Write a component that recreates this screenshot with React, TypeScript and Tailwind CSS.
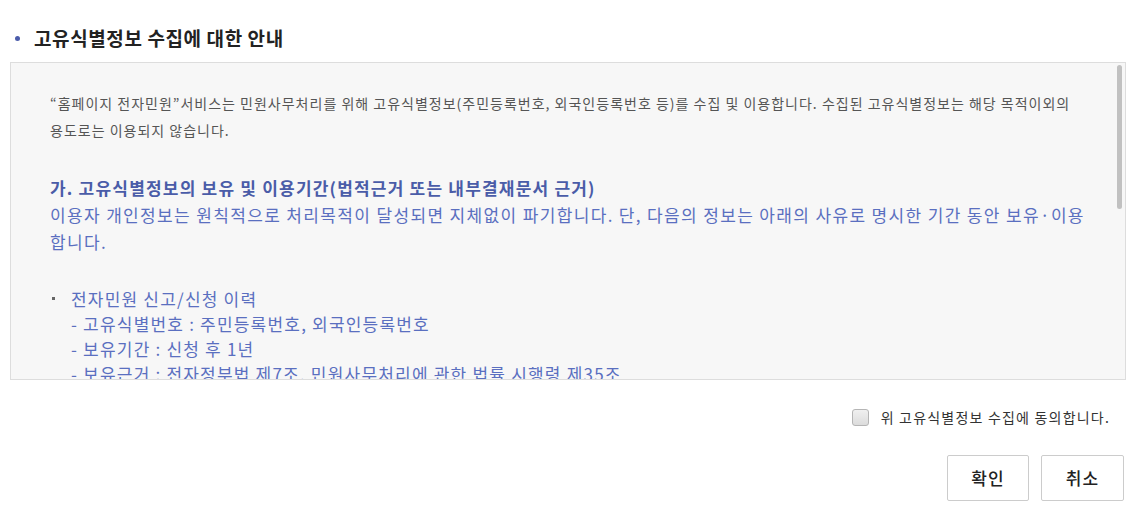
import React from 'react';

const font = { fontFamily: '"Noto Sans CJK KR", "Noto Sans", sans-serif' };

function Notice() {
  return (
    <div className="relative mx-[10px] h-[318px] overflow-hidden border border-[#dddddd] bg-[#f7f7f7]">
      <div className="pl-[39px] pr-[30px] pt-[27px]">
        <p className="whitespace-nowrap text-[14px] leading-[27px] tracking-[1px] text-[#555555]">
          “홈페이지 전자민원”서비스는 민원사무처리를 위해 고유식별정보(주민등록번호, 외국인등록번호 등)를 수집 및 이용합니다. 수집된 고유식별정보는 해당 목적이외의
          <br />
          용도로는 이용되지 않습니다.
        </p>

        <h3 className="mt-[30px] whitespace-nowrap text-[17px] font-bold leading-[27px] tracking-[1.2px] text-[#4a5ca8]">
          가. 고유식별정보의 보유 및 이용기간(법적근거 또는 내부결재문서 근거)
        </h3>
        <p className="whitespace-nowrap text-[17px] leading-[27px] tracking-[1.35px] text-[#5a6fc0]">
          이용자 개인정보는 원칙적으로 처리목적이 달성되면 지체없이 파기합니다. 단, 다음의 정보는 아래의 사유로 명시한 기간 동안 보유·이용
          <br />
          합니다.
        </p>

        <ul className="mt-[31px] text-[17px] leading-[25px] tracking-[1.2px] text-[#5a6fc0]">
          <li className="flex">
            <span className="w-[21px] shrink-0 pt-[11px] pl-[2px]">
              <span className="block h-[3px] w-[3px] bg-[#666666]" />
            </span>
            <div className="whitespace-nowrap">
              <div>전자민원 신고/신청 이력</div>
              <div>- 고유식별번호 : 주민등록번호, 외국인등록번호</div>
              <div>- 보유기간 : 신청 후 1년</div>
              <div>- 보유근거 : 전자정부법 제7조, 민원사무처리에 관한 법률 시행령 제35조</div>
            </div>
          </li>
        </ul>
      </div>

      {/* scrollbar thumb */}
      <div className="absolute right-[3px] top-[2px] h-[144px] w-[5px] rounded-full bg-[#c1c1c1]" />
    </div>
  );
}

export default function App() {
  return (
    <div className="h-[517px] w-[1136px] bg-white" style={font}>
      <div className="flex items-center pl-[15px] pt-[26px] pb-[12px]">
        <span className="h-[5px] w-[5px] rounded-full bg-[#4b5cab]" />
        <h2 className="ml-[14px] text-[19px] font-bold leading-[24px] tracking-[0.6px] text-[#222222]">
          고유식별정보 수집에 대한 안내
        </h2>
      </div>

      <Notice />

      <div className="mr-[26px] mt-[28px] flex items-center justify-end">
        <label className="flex items-center">
          <span className="h-[17px] w-[17px] rounded-[3px] border border-[#b5b5b5] bg-gradient-to-b from-[#f0f0f0] to-[#dcdcdc]" />
          <span className="ml-[12px] text-[14px] leading-[18px] tracking-[1.2px] text-[#333333]">
            위 고유식별정보 수집에 동의합니다.
          </span>
        </label>
      </div>

      <div className="mr-[12px] mt-[29px] flex justify-end gap-[12px]">
        <button
          type="button"
          className="h-[46px] w-[82px] rounded-[2px] border border-[#cccccc] bg-white text-[17px] font-medium tracking-[1px] text-[#222222]"
        >
          확인
        </button>
        <button
          type="button"
          className="h-[46px] w-[83px] rounded-[2px] border border-[#cccccc] bg-white text-[17px] font-medium tracking-[1px] text-[#222222]"
        >
          취소
        </button>
      </div>
    </div>
  );
}
